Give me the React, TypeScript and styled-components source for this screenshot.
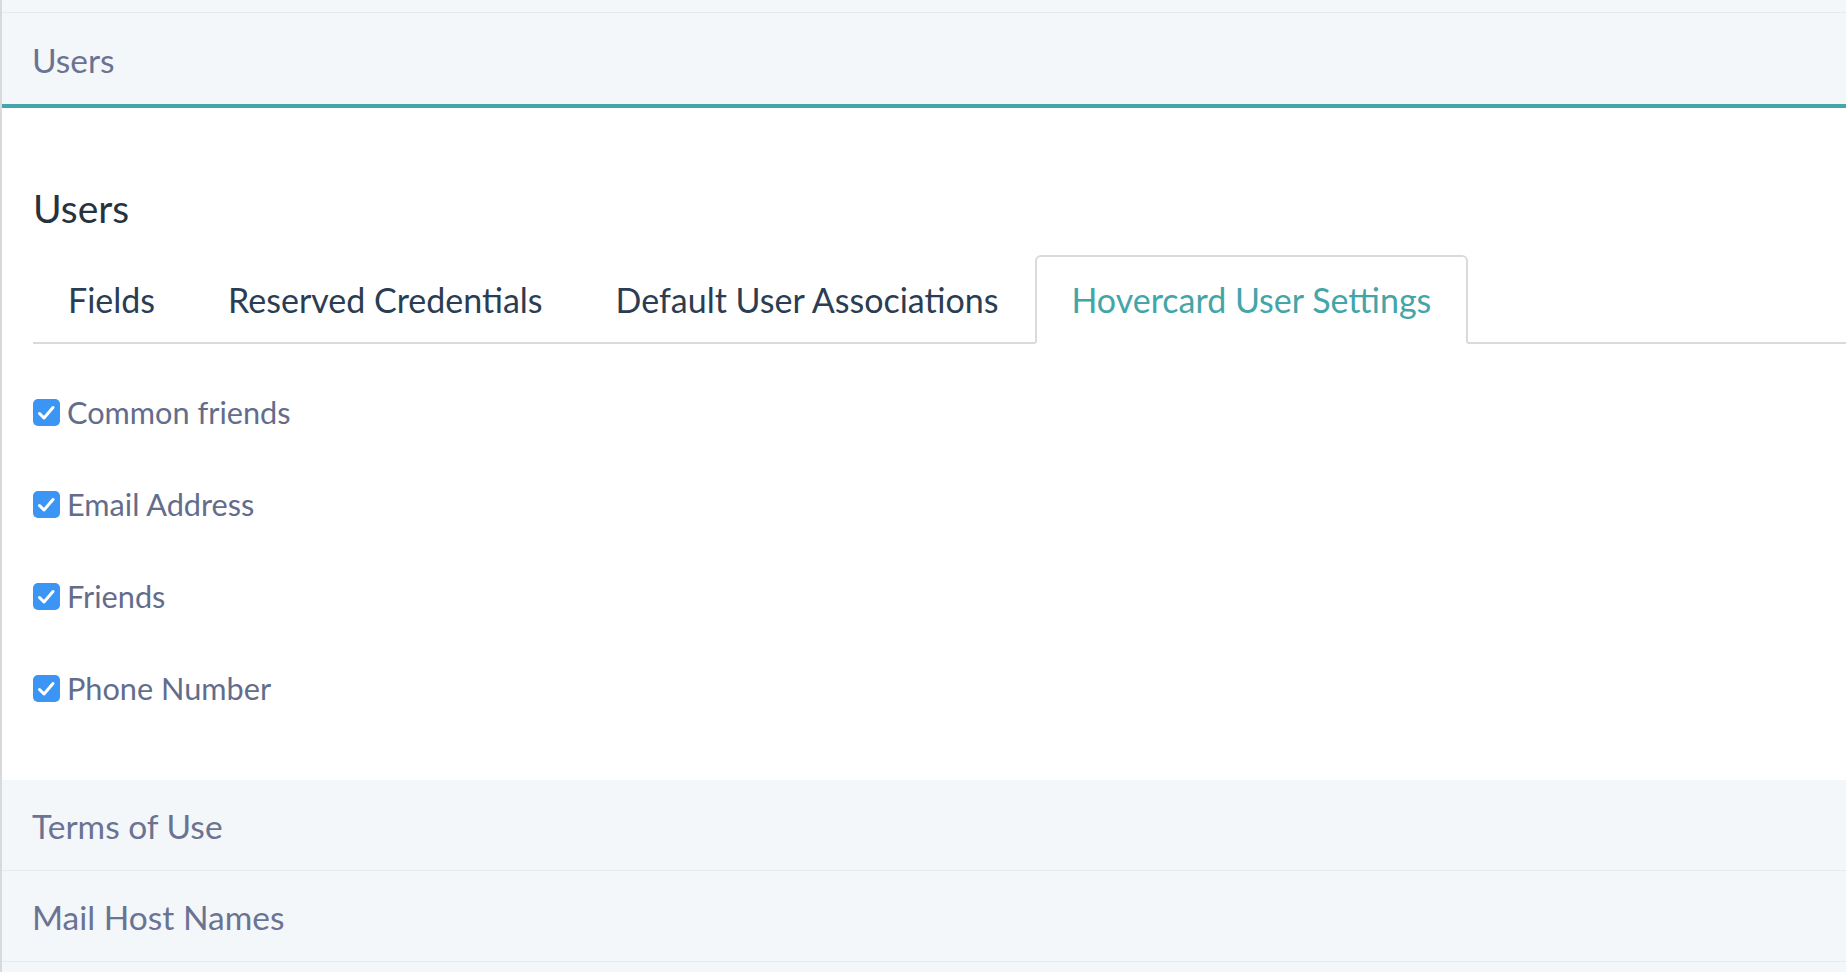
import { useState } from "react";
import styled, { createGlobalStyle } from "styled-components";

const GlobalStyle = createGlobalStyle`
  html, body {
    margin: 0;
    padding: 0;
    background: #ffffff;
  }
  body {
    font-family: Lato, "Open Sans", "Liberation Sans", sans-serif;
    -webkit-font-smoothing: antialiased;
  }
`;

const Page = styled.div`
  min-height: 972px;
  border-left: 2px solid #d9d9d9;
  overflow: hidden;
`;

const PanelStub = styled.div`
  height: 12px;
  background: #f4f7fa;
  border-bottom: 1px solid #e6eaee;
`;

const PanelHeader = styled.div<{ $open?: boolean }>`
  box-sizing: border-box;
  height: ${(p) => (p.$open ? "95px" : "91px")};
  display: flex;
  align-items: center;
  padding: 2px 0 0 30px;
  background: #f4f7fa;
  color: #6b7392;
  font-size: 33.5px;
  border-bottom: ${(p) => (p.$open ? "4px solid #44a6a8" : "1px solid #e6eaee")};
`;

const PanelBody = styled.div`
  padding: 77px 0 74px 31px;
  background: #ffffff;
`;

const Heading = styled.h2`
  margin: 0;
  font-size: 39px;
  font-weight: 400;
  line-height: 47px;
  color: #26333e;
`;

const TabBar = styled.div`
  display: flex;
  margin-top: 23px;
  height: 87px;
  border-bottom: 2px solid #dadada;
`;

const Tab = styled.div<{ $active?: boolean }>`
  box-sizing: border-box;
  height: 89px;
  margin-bottom: -2px;
  padding: 0 34.5px;
  display: flex;
  align-items: center;
  font-size: 34px;
  color: ${(p) => (p.$active ? "#44a5a8" : "#2b3d52")};
  border: 2px solid ${(p) => (p.$active ? "#dadada" : "transparent")};
  border-bottom-color: ${(p) => (p.$active ? "#ffffff" : "transparent")};
  border-radius: 6px 6px 0 0;
  background: ${(p) => (p.$active ? "#ffffff" : "transparent")};
  cursor: pointer;
  white-space: nowrap;

  &:first-child {
    padding-left: 33px;
  }
`;

const OptionList = styled.div`
  display: flex;
  flex-direction: column;
  gap: 56px;
  padding-top: 50px;
`;

const OptionRow = styled.label`
  display: flex;
  align-items: center;
  gap: 7px;
  height: 36px;
  font-size: 30.7px;
  color: #636d8b;
  cursor: pointer;
`;

const Box = styled.span<{ $checked: boolean }>`
  flex: none;
  width: 27px;
  height: 27px;
  border-radius: 5px;
  background: ${(p) => (p.$checked ? "#3b95f5" : "#ffffff")};
  border: ${(p) => (p.$checked ? "none" : "2px solid #b8c0cc")};
  box-sizing: border-box;
  display: flex;
  align-items: center;
  justify-content: center;
`;

const tabs = [
  "Fields",
  "Reserved Credentials",
  "Default User Associations",
  "Hovercard User Settings",
];

const options = ["Common friends", "Email Address", "Friends", "Phone Number"];

const Checkbox = ({ checked }: { checked: boolean }) => (
  <Box $checked={checked}>
    {checked && (
      <svg width="27" height="27" viewBox="0 0 27 27">
        <path
          d="M6.5 14.5 L11 19 L20 8.5"
          fill="none"
          stroke="#ffffff"
          strokeWidth="3"
          strokeLinecap="round"
          strokeLinejoin="round"
        />
      </svg>
    )}
  </Box>
);

export default function App() {
  const [active, setActive] = useState(3);
  const [checked, setChecked] = useState<boolean[]>([true, true, true, true]);

  const toggle = (i: number) =>
    setChecked((prev) => prev.map((v, j) => (j === i ? !v : v)));

  return (
    <>
      <GlobalStyle />
      <Page>
        <PanelStub />
        <PanelHeader $open>Users</PanelHeader>
        <PanelBody>
          <Heading>Users</Heading>
          <TabBar>
            {tabs.map((t, i) => (
              <Tab key={t} $active={i === active} onClick={() => setActive(i)}>
                {t}
              </Tab>
            ))}
          </TabBar>
          <OptionList>
            {options.map((o, i) => (
              <OptionRow key={o} onClick={() => toggle(i)}>
                <Checkbox checked={checked[i]} />
                {o}
              </OptionRow>
            ))}
          </OptionList>
        </PanelBody>
        <PanelHeader>Terms of Use</PanelHeader>
        <PanelHeader>Mail Host Names</PanelHeader>
        <PanelStub />
      </Page>
    </>
  );
}
